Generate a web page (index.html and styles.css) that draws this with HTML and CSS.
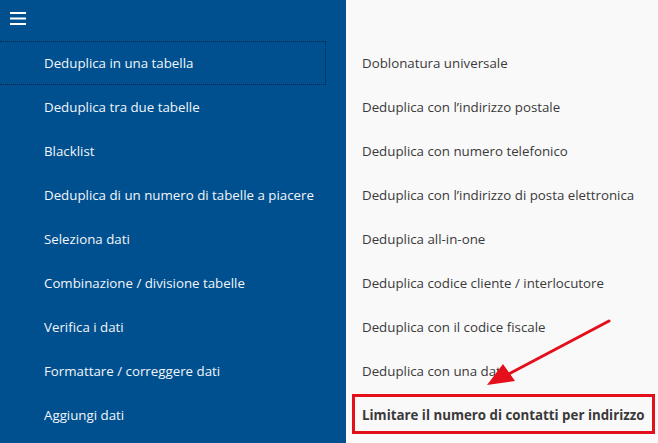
FILE: index.html
```html
<!DOCTYPE html>
<html lang="it">
<head>
<meta charset="utf-8">
<title>Deduplica</title>
<link rel="stylesheet" href="styles.css">
</head>
<body>
<div class="app">
  <nav class="nav">
    <div class="nav-header">
      <button class="hamburger" aria-label="Menu">
        <svg width="16" height="13" viewBox="0 0 16 13"><rect x="0" y="0" width="16" height="2" fill="#fff"/><rect x="0" y="5.5" width="16" height="2" fill="#fff"/><rect x="0" y="11" width="16" height="2" fill="#fff"/></svg>
      </button>
    </div>
    <ul class="nav-list">
      <li class="nav-item focused">Deduplica in una tabella</li>
      <li class="nav-item">Deduplica tra due tabelle</li>
      <li class="nav-item">Blacklist</li>
      <li class="nav-item">Deduplica di un numero di tabelle a piacere</li>
      <li class="nav-item">Seleziona dati</li>
      <li class="nav-item">Combinazione / divisione tabelle</li>
      <li class="nav-item">Verifica i dati</li>
      <li class="nav-item">Formattare / correggere dati</li>
      <li class="nav-item">Aggiungi dati</li>
    </ul>
  </nav>
  <main class="content">
    <ul class="sub-list">
      <li class="sub-item">Doblonatura universale</li>
      <li class="sub-item">Deduplica con l’indirizzo postale</li>
      <li class="sub-item">Deduplica con numero telefonico</li>
      <li class="sub-item">Deduplica con l’indirizzo di posta elettronica</li>
      <li class="sub-item">Deduplica all-in-one</li>
      <li class="sub-item">Deduplica codice cliente / interlocutore</li>
      <li class="sub-item">Deduplica con il codice fiscale</li>
      <li class="sub-item">Deduplica con una data</li>
      <li class="sub-item strong">Limitare il numero di contatti per indirizzo</li>
    </ul>
  </main>
  <div class="highlight-box"></div>
  <svg class="arrow" width="658" height="443" viewBox="0 0 658 443">
    <line x1="609" y1="321" x2="505" y2="376" stroke="#e3101c" stroke-width="3" stroke-linecap="round"/>
    <polygon points="487,385 503,364 515,381" fill="#e3101c"/>
  </svg>
</div>
</body>
</html>
```
FILE: styles.css
```css
html, body {
  margin: 0;
  padding: 0;
  height: 100%;
}
body {
  font-family: "Open Sans", "Noto Sans", "DejaVu Sans", sans-serif;
  font-size: 13.3px;
  background: #f9f9f9;
  overflow: hidden;
}
.app {
  position: relative;
  display: flex;
  width: 658px;
  height: 443px;
}
.nav {
  width: 346px;
  flex: none;
  background: #00508f;
  color: #f2f5f9;
}
.nav-header {
  height: 41px;
  display: flex;
  align-items: flex-start;
}
.hamburger {
  margin: 12px 0 0 10px;
  padding: 0;
  border: 0;
  background: none;
  display: flex;
}
.nav-list, .sub-list {
  list-style: none;
  margin: 0;
  padding: 0;
}
.nav-item {
  height: 44px;
  display: flex;
  align-items: center;
  padding-left: 44px;
  margin-right: 20px;
  box-sizing: border-box;
}
.nav-item.focused {
  border: 1px dotted #0b2540;
  border-left: none;
}
.content {
  flex: 1;
  padding-top: 41px;
  color: #3a3a3a;
}
.sub-item {
  height: 44px;
  display: flex;
  align-items: center;
  padding-left: 16px;
}
.sub-item.strong {
  font-weight: 700;
}
.highlight-box {
  position: absolute;
  left: 352px;
  top: 394px;
  width: 303px;
  height: 40px;
  box-sizing: border-box;
  border: 3px solid #e3101c;
  pointer-events: none;
}
.arrow {
  position: absolute;
  left: 0;
  top: 0;
  pointer-events: none;
}
```
